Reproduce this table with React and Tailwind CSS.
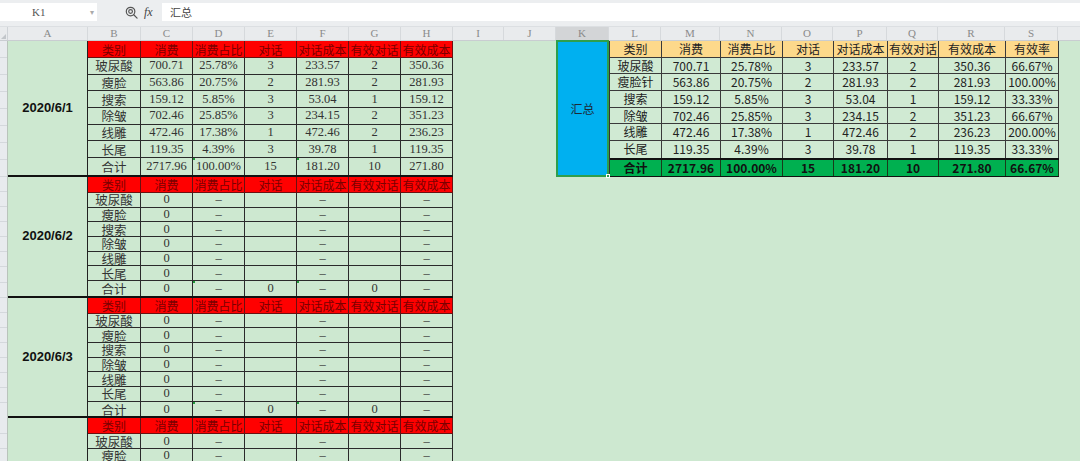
import React from "react"

const SANS = "font-['Noto_Sans_CJK_SC',sans-serif]"
const SONG = "font-['Liberation_Serif','Noto_Sans_CJK_SC',serif]"

const HEAD = ["类别", "消费", "消费占比", "对话", "对话成本", "有效对话", "有效成本"]
const SUM_HEAD = [...HEAD, "有效率"]

const COLS = [
  ["A", "w-[80px]"], ["B", "w-[53px]"], ["C", "w-[52px]"], ["D", "w-[52px]"],
  ["E", "w-[52px]"], ["F", "w-[52px]"], ["G", "w-[52px]"], ["H", "w-[52px]"],
  ["I", "w-[51px]"], ["J", "w-[52px]"], ["K", "w-[53px]"], ["L", "w-[52px]"],
  ["M", "w-[59px]"], ["N", "w-[62px]"], ["O", "w-[51px]"], ["P", "w-[54px]"],
  ["Q", "w-[51px]"], ["R", "w-[67px]"], ["S", "w-[53px]"],
]

const DAY1 = [
  ["玻尿酸", "700.71", "25.78%", "3", "233.57", "2", "350.36"],
  ["瘦脸", "563.86", "20.75%", "2", "281.93", "2", "281.93"],
  ["搜索", "159.12", "5.85%", "3", "53.04", "1", "159.12"],
  ["除皱", "702.46", "25.85%", "3", "234.15", "2", "351.23"],
  ["线雕", "472.46", "17.38%", "1", "472.46", "2", "236.23"],
  ["长尾", "119.35", "4.39%", "3", "39.78", "1", "119.35"],
  ["合计", "2717.96", "100.00%", "15", "181.20", "10", "271.80"],
]

const EMPTY = [
  ...["玻尿酸", "瘦脸", "搜索", "除皱", "线雕", "长尾"].map((n) => [n, "0", "–", "", "–", "", "–"]),
  ["合计", "0", "–", "0", "–", "0", "–"],
]

const SUMMARY = [
  ["玻尿酸", "700.71", "25.78%", "3", "233.57", "2", "350.36", "66.67%"],
  ["瘦脸针", "563.86", "20.75%", "2", "281.93", "2", "281.93", "100.00%"],
  ["搜索", "159.12", "5.85%", "3", "53.04", "1", "159.12", "33.33%"],
  ["除皱", "702.46", "25.85%", "3", "234.15", "2", "351.23", "66.67%"],
  ["线雕", "472.46", "17.38%", "1", "472.46", "2", "236.23", "200.00%"],
  ["长尾", "119.35", "4.39%", "3", "39.78", "1", "119.35", "33.33%"],
]
const TOTAL = ["合计", "2717.96", "100.00%", "15", "181.20", "10", "271.80", "66.67%"]

function RowNums({ count }) {
  // row numbers are cut by the frozen edge; only thin tick lines show
  return (
    <div className="w-[8px] shrink-0 flex flex-col bg-[#e8ebee] border-r border-[#b9c4bb]">
      {Array.from({ length: count }).map((_, i) => (
        <div key={i} className="flex-1 border-b border-[#d4d8dc]" />
      ))}
    </div>
  )
}

function LeftBlock({ date, rows, big }) {
  const headH = big ? "h-[17px]" : "h-[16px]"
  const rowH = big ? "h-[16.7px]" : "h-[14.7px]"
  return (
    <div className="flex">
      <RowNums count={rows.length + 1} />
      <div className="flex border-b-2 border-[#111]">
        <div className="w-[80px] shrink-0 border-r border-[#222] flex items-center justify-center text-[13px] font-bold text-[#111] font-['Liberation_Sans',sans-serif]">
          {date}
        </div>
        <div className="flex flex-col">
          <div className={`grid grid-cols-[53px_52px_52px_52px_52px_52px_52px] ${headH} bg-[#ff0000]`}>
            {HEAD.map((h) => (
              <div key={h} className={`border-r border-b border-[#6b1010] flex items-center justify-center text-[12px] leading-[13px] text-[#7a0000] whitespace-nowrap ${SANS}`}>
                {h}
              </div>
            ))}
          </div>
          {rows.map((r, ri) => (
            <div key={ri} className={`grid grid-cols-[53px_52px_52px_52px_52px_52px_52px] ${rowH}`}>
              {r.map((c, ci) => (
                <div
                  key={ci}
                  className={`relative border-r border-[#2a2a2a] flex items-center justify-center whitespace-nowrap text-[12.5px] leading-[13px] text-[#333] ${ci === 0 ? SANS : SONG} ${ri === rows.length - 1 ? "" : "border-b"}`}
                >
                  {ri === rows.length - 1 && (ci === 2 || ci === 4) && (
                    <span className="absolute left-0 top-0 w-[2px] h-[2px] bg-[#1f9a3a]" />
                  )}
                  {c}
                </div>
              ))}
            </div>
          ))}
        </div>
      </div>
    </div>
  )
}

function SummaryTable() {
  return (
    <div className="flex flex-col border-l border-[#333]">
      <div className="grid grid-cols-[52px_59px_62px_51px_54px_51px_67px_53px] h-[16.7px] bg-[#fdd98b]">
        {SUM_HEAD.map((h) => (
          <div key={h} className="border-r border-b border-[#3a3a3a] flex items-center justify-center text-[12px] leading-[14px] text-[#222] whitespace-nowrap">
            {h}
          </div>
        ))}
      </div>
      {SUMMARY.map((r, ri) => (
        <div key={ri} className="grid grid-cols-[52px_59px_62px_51px_54px_51px_67px_53px] h-[16.7px] bg-[#d0ead3]">
          {r.map((c, ci) => (
            <div key={ci} className={`border-r border-[#3a3a3a] flex items-center justify-center text-[12px] leading-[14px] text-[#222] whitespace-nowrap ${ri === SUMMARY.length - 1 ? "" : "border-b"}`}>
              {c}
            </div>
          ))}
        </div>
      ))}
      <div className="grid grid-cols-[52px_59px_62px_51px_54px_51px_67px_53px] h-[19px] bg-[#00b050] border-t-2 border-b border-[#111]">
        {TOTAL.map((c, ci) => (
          <div key={ci} className="border-r border-[#1a3a1a] flex items-center justify-center text-[12px] leading-[14px] font-bold text-[#111] whitespace-nowrap">
            {c}
          </div>
        ))}
      </div>
    </div>
  )
}

export default function App() {
  return (
    <div className={`w-[1080px] h-[461px] overflow-hidden bg-[#cde8d0] ${SANS}`}>
      {/* formula bar */}
      <div className="h-[27px] bg-[#eceef0] flex items-start pt-[3px] border-b border-[#dcdfe2]">
        <div className="w-[97px] h-[18px] bg-white flex items-center relative">
          <span className="ml-[32px] text-[11px] text-[#555] font-['Liberation_Serif',serif]">K1</span>
          <span className="absolute right-[3px] top-[3px] text-[8px] text-[#aaa]">▾</span>
        </div>
        <div className="w-[65px] h-[18px] flex items-center gap-[6px] pl-[28px]">
          <svg width="13" height="13" viewBox="0 0 14 14" fill="none" stroke="#555" strokeWidth="1.3">
            <circle cx="6" cy="6" r="4.6" />
            <circle cx="6" cy="6" r="2" />
            <path d="M9.4 9.4 L13 13" strokeLinecap="round" />
          </svg>
          <span className="text-[12px] italic text-[#444] font-['Liberation_Serif',serif]">fx</span>
        </div>
        <div className="flex-1 h-[18px] bg-white flex items-center pl-[8px] text-[11px] text-[#444]">汇总</div>
      </div>

      {/* column headers */}
      <div className="h-[14px] flex bg-[#e9ebed] border-b border-[#c9cdd1]">
        <div className="w-[8px] shrink-0 border-r border-[#cfd3d7] relative">
          <span className="absolute left-[1px] bottom-[1px] w-0 h-0 border-l-[5px] border-l-transparent border-b-[5px] border-b-[#c2c6ca]" />
        </div>
        {COLS.map(([l, w]) => (
          <div
            key={l}
            className={`${w} shrink-0 border-r border-[#d6d9dc] flex items-center justify-center text-[11px] text-[#8a8a8a] font-['Liberation_Serif',serif] ${l === "K" ? "bg-[#d3d5d7]" : ""}`}
          >
            {l}
          </div>
        ))}
        <div className="flex-1" />
      </div>

      {/* sheet body */}
      <div className="flex">
        <div className="w-[453px] shrink-0 flex flex-col">
          <LeftBlock date="2020/6/1" rows={DAY1} big />
          <LeftBlock date="2020/6/2" rows={EMPTY} />
          <LeftBlock date="2020/6/3" rows={EMPTY} />
          <LeftBlock date="2020/6/4" rows={EMPTY} />
        </div>

        <div className="flex items-start pl-[103px]">
          <div className="relative -mt-px w-[53px] h-[137px] bg-[#00b0f0] border-2 border-[#2f9e4c] flex items-center justify-center text-[12px] text-[#1c2a38]">
            汇总
            <span className="absolute -right-[3px] -bottom-[3px] w-[4px] h-[4px] bg-[#2f9e4c] border border-white" />
          </div>
          <SummaryTable />
        </div>
      </div>
    </div>
  )
}
